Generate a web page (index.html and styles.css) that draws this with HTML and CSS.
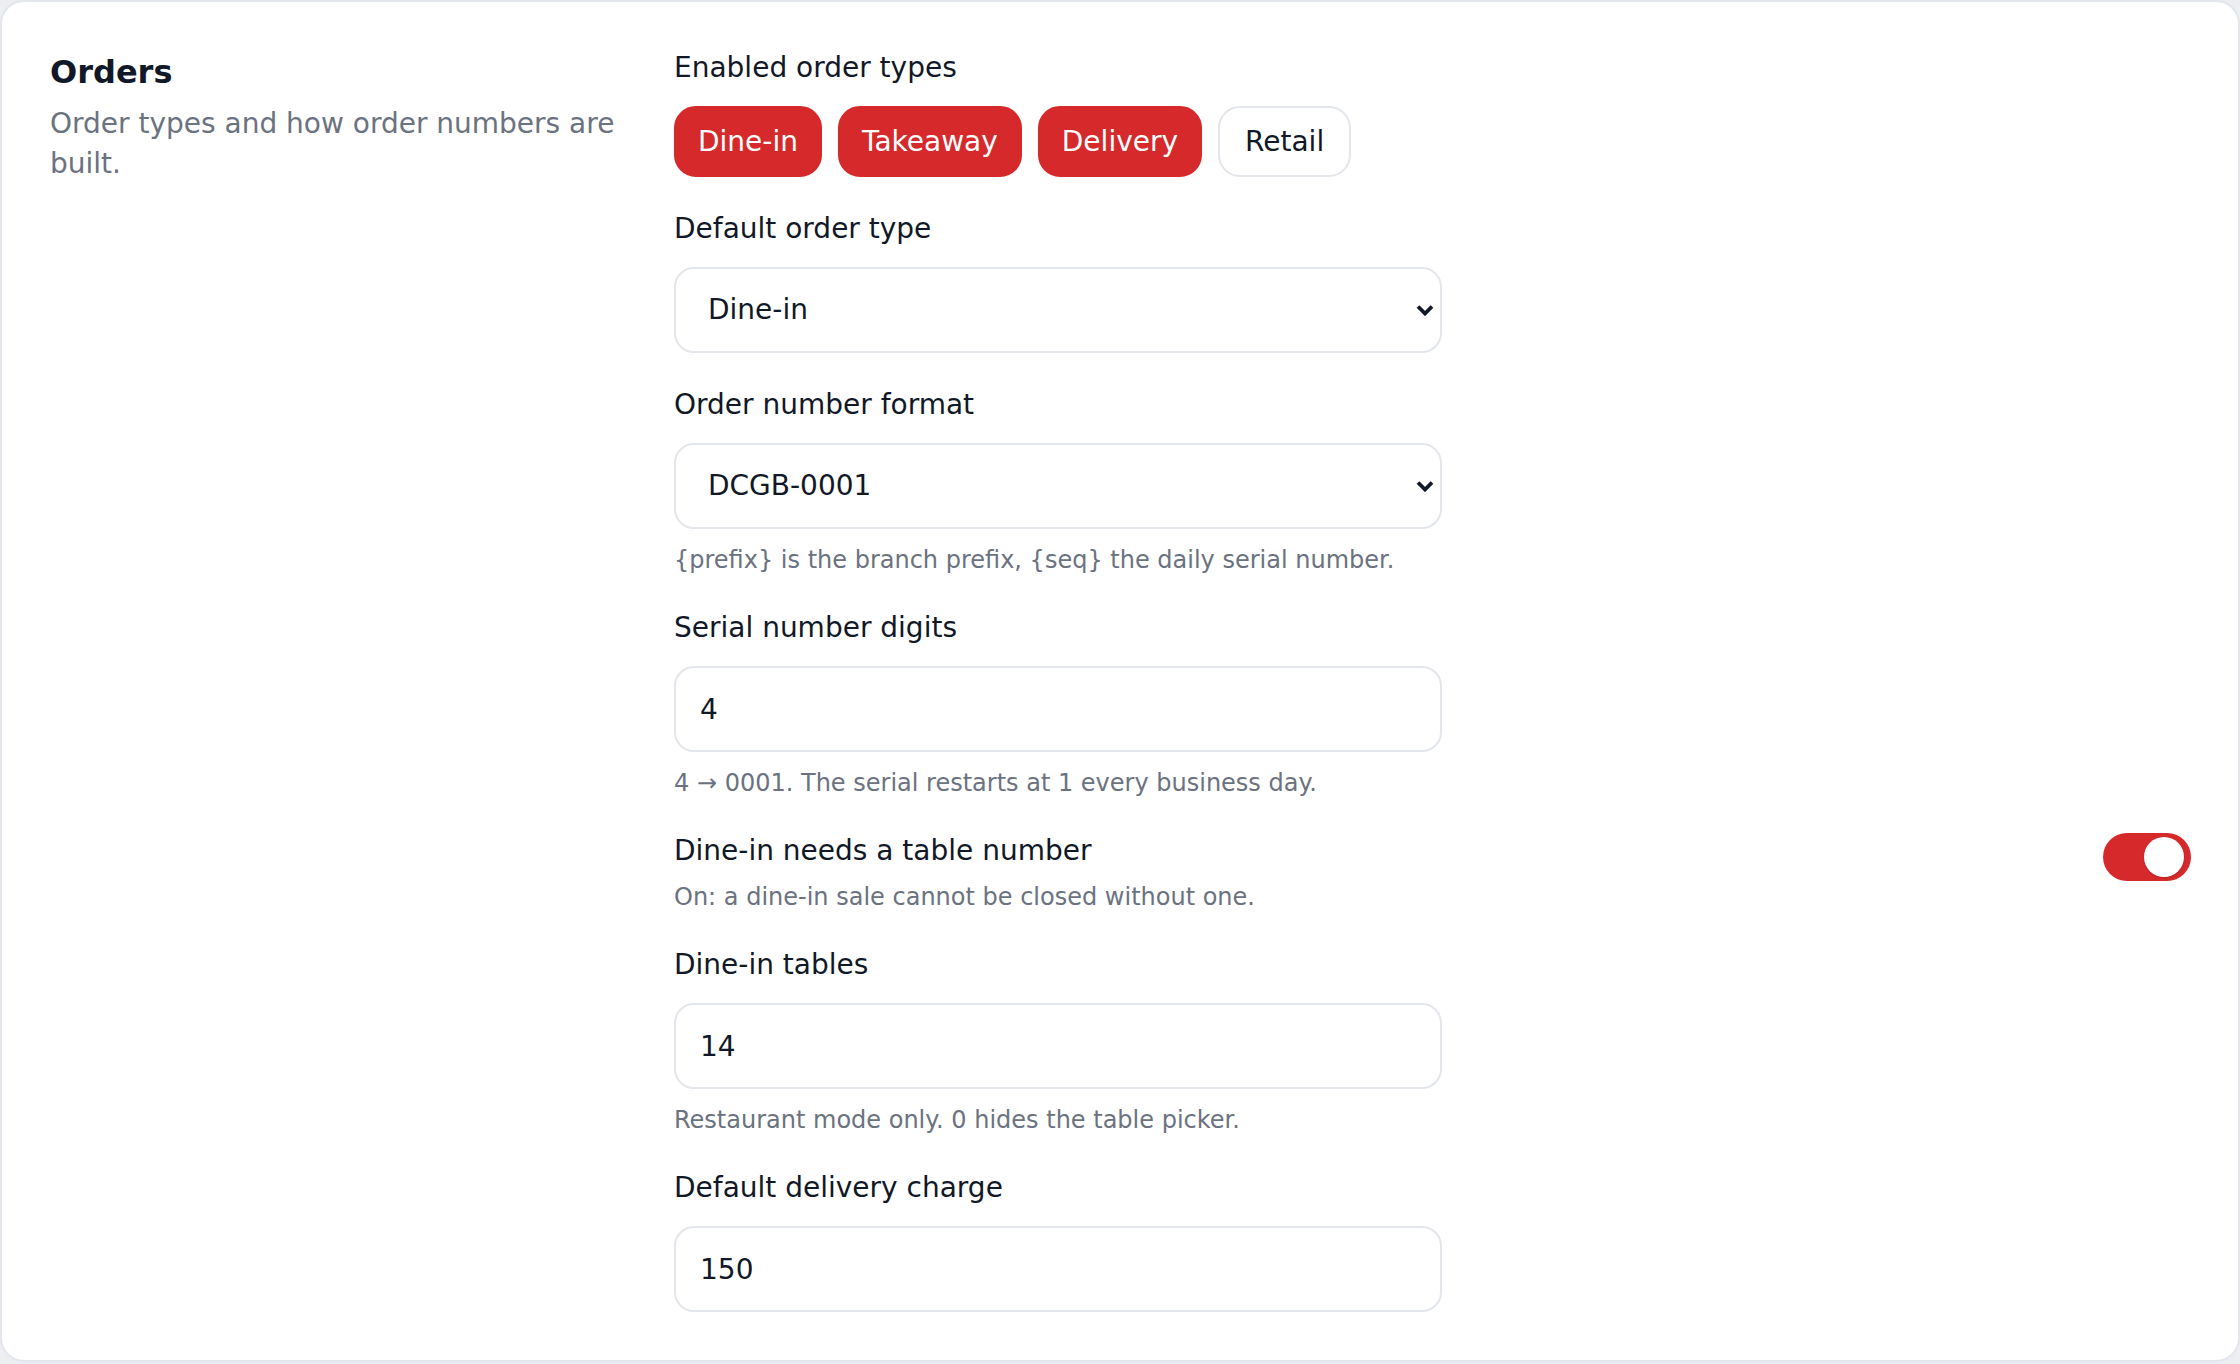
FILE: index.html
```html
<!DOCTYPE html>
<html lang="en">
<head>
<meta charset="utf-8">
<title>Orders settings</title>
<link rel="stylesheet" href="styles.css">
</head>
<body>
<section class="card">
  <div class="intro">
    <h2 class="title">Orders</h2>
    <p class="subtitle">Order types and how order numbers are built.</p>
  </div>
  <div class="fields">
    <div class="field">
      <div class="label">Enabled order types</div>
      <div class="chips">
        <button class="chip on">Dine-in</button>
        <button class="chip on">Takeaway</button>
        <button class="chip on">Delivery</button>
        <button class="chip">Retail</button>
      </div>
    </div>

    <div class="field">
      <label class="label" for="deftype">Default order type</label>
      <div class="select-wrap">
        <select id="deftype" class="control select">
          <option>Dine-in</option>
          <option>Takeaway</option>
          <option>Delivery</option>
        </select>
        <svg class="chev" viewBox="0 0 18 12" width="18" height="12" aria-hidden="true"><polyline points="2,2.5 9,9.5 16,2.5" fill="none" stroke="#111827" stroke-width="3.8" stroke-linejoin="miter"/></svg>
      </div>
    </div>

    <div class="field">
      <label class="label" for="fmt">Order number format</label>
      <div class="select-wrap">
        <select id="fmt" class="control select">
          <option>DCGB-0001</option>
        </select>
        <svg class="chev" viewBox="0 0 18 12" width="18" height="12" aria-hidden="true"><polyline points="2,2.5 9,9.5 16,2.5" fill="none" stroke="#111827" stroke-width="3.8" stroke-linejoin="miter"/></svg>
      </div>
      <p class="help">{prefix} is the branch prefix, {seq} the daily serial number.</p>
    </div>

    <div class="field">
      <label class="label" for="digits">Serial number digits</label>
      <input id="digits" class="control" type="text" inputmode="numeric" value="4">
      <p class="help">4 → 0001. The serial restarts at 1 every business day.</p>
    </div>

    <div class="field toggle-row">
      <div class="toggle-text">
        <div class="label plain">Dine-in needs a table number</div>
        <p class="desc">On: a dine-in sale cannot be closed without one.</p>
      </div>
      <button class="toggle" aria-pressed="true"><span class="knob"></span></button>
    </div>

    <div class="field">
      <label class="label" for="tables">Dine-in tables</label>
      <input id="tables" class="control" type="text" inputmode="numeric" value="14">
      <p class="help">Restaurant mode only. 0 hides the table picker.</p>
    </div>

    <div class="field">
      <label class="label" for="charge">Default delivery charge</label>
      <input id="charge" class="control" type="text" inputmode="numeric" value="150">
    </div>
  </div>
</section>
</body>
</html>
```

FILE: styles.css
```css
* { box-sizing: border-box; }

html, body {
  margin: 0;
  padding: 0;
}

body {
  background: #eceef2;
  font-family: "DejaVu Sans", "Noto Sans", sans-serif;
  color: #111827;
}

.card {
  background: #ffffff;
  border: 2px solid #e3e6eb;
  border-radius: 24px;
  padding: 46px 47px 46px 48px;
  display: grid;
  grid-template-columns: 576px 1fr;
  column-gap: 48px;
  min-height: 1362px;
  align-items: start;
}

.title {
  margin: 0;
  font-size: 32px;
  line-height: 48px;
  font-weight: 700;
  color: #111827;
}

.subtitle {
  margin: 8px 0 0;
  font-size: 28px;
  line-height: 40px;
  color: #6b7280;
}

.fields {
  display: flex;
  flex-direction: column;
  gap: 32px;
}

.field {
  display: flex;
  flex-direction: column;
}

.label {
  display: block;
  font-size: 28px;
  line-height: 40px;
  color: #111827;
  margin-bottom: 18px;
}

.label.plain {
  margin-bottom: 0;
}

.chips {
  display: flex;
  gap: 16px;
}

.chip {
  font-family: inherit;
  font-size: 28px;
  line-height: 40px;
  padding: 13.5px 25px;
  border: 2px solid #e3e6eb;
  border-radius: 22px;
  background: #ffffff;
  color: #111827;
  cursor: pointer;
}

.chip.on {
  padding: 13.5px 22px;
  background: #d5292b;
  border-color: #d5292b;
  color: #ffffff;
}

.select-wrap {
  position: relative;
  max-width: 768px;
}

.control {
  display: block;
  width: 100%;
  max-width: 768px;
  height: 86px;
  font-family: inherit;
  font-size: 28px;
  line-height: 40px;
  color: #111827;
  background: #ffffff;
  border: 2px solid #e3e6eb;
  border-radius: 20px;
  padding: 0 24px;
  outline: none;
}

.select {
  appearance: none;
  -webkit-appearance: none;
  padding-left: 32px;
  padding-right: 48px;
}

.chev {
  position: absolute;
  right: 8px;
  top: 37px;
  pointer-events: none;
}

.help {
  margin: 15px 0 0;
  font-size: 24px;
  line-height: 32px;
  color: #6b7280;
}

.toggle-row {
  flex-direction: row;
  justify-content: space-between;
  align-items: flex-start;
}

.desc {
  margin: 10px 0 0;
  font-size: 24px;
  line-height: 32px;
  color: #6b7280;
}

.toggle {
  flex: none;
  width: 88px;
  height: 48px;
  margin-top: 2px;
  border: none;
  border-radius: 24px;
  background: #d5292b;
  padding: 4px 7px 4px 4px;
  display: flex;
  justify-content: flex-end;
  align-items: center;
  cursor: pointer;
}

.knob {
  width: 40px;
  height: 40px;
  border-radius: 50%;
  background: #ffffff;
  box-shadow: 0 1px 2px rgba(0, 0, 0, 0.15);
}
```
